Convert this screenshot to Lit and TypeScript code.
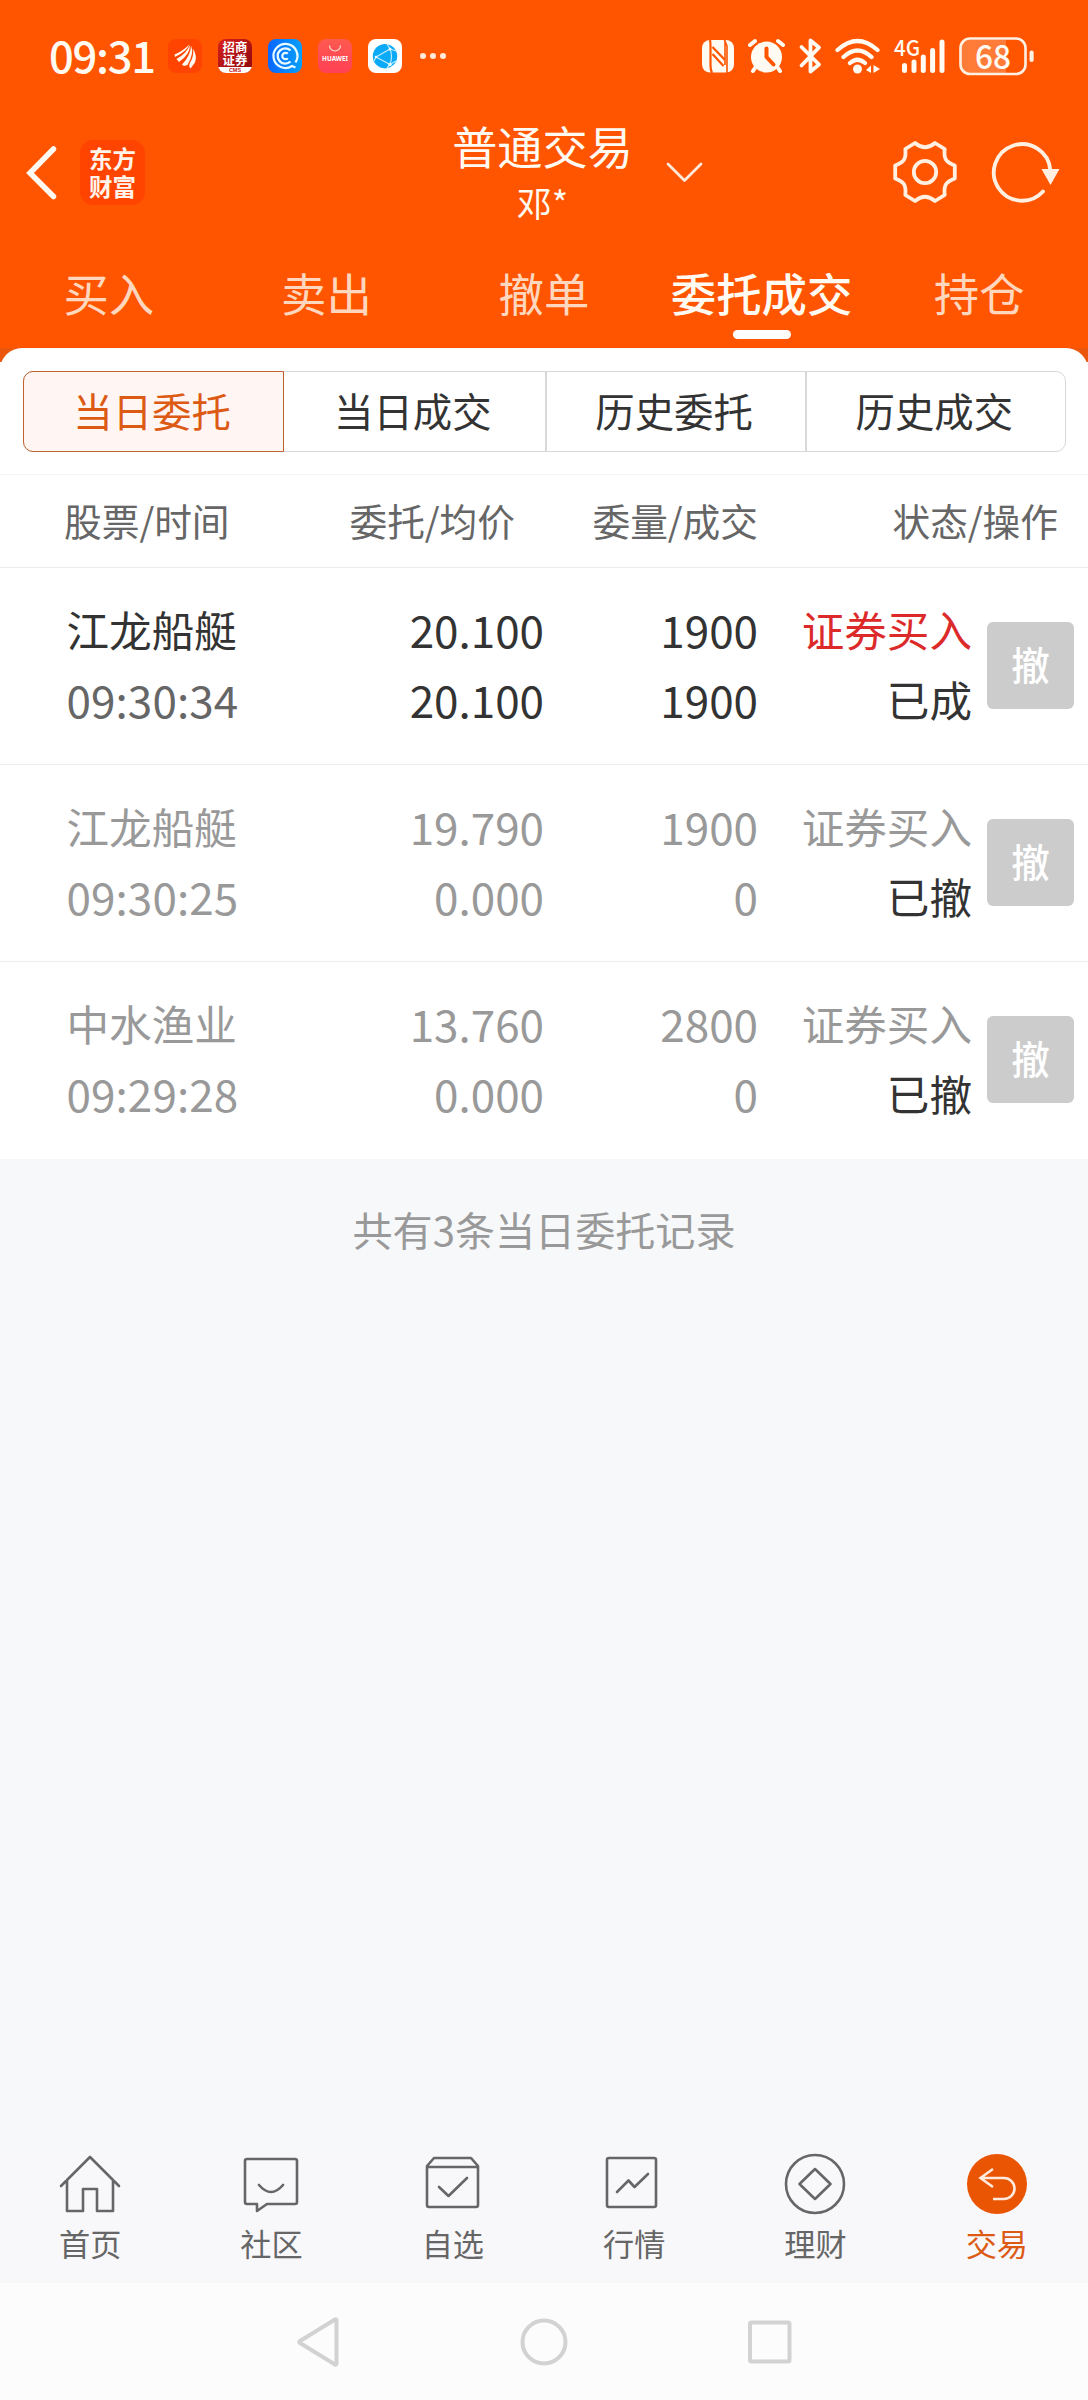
import { LitElement, html, css, svg } from "lit";
import { customElement } from "lit/decorators.js";
import { classMap } from "lit/directives/class-map.js";

interface Order {
  name: string;
  time: string;
  price: string;
  avg: string;
  qty: string;
  filled: string;
  side: string;
  state: string;
  dim: boolean;
}

const ORDERS: Order[] = [
  { name: "江龙船艇", time: "09:30:34", price: "20.100", avg: "20.100", qty: "1900", filled: "1900", side: "证券买入", state: "已成", dim: false },
  { name: "江龙船艇", time: "09:30:25", price: "19.790", avg: "0.000", qty: "1900", filled: "0", side: "证券买入", state: "已撤", dim: true },
  { name: "中水渔业", time: "09:29:28", price: "13.760", avg: "0.000", qty: "2800", filled: "0", side: "证券买入", state: "已撤", dim: true },
];

const TABS = ["买入", "卖出", "撤单", "委托成交", "持仓"];
const SEGMENTS = ["当日委托", "当日成交", "历史委托", "历史成交"];
const HEADS = ["股票/时间", "委托/均价", "委量/成交", "状态/操作"];

const NAV = [
  { label: "首页", icon: svg`<path d="M3 33 L32 4 L61 33 M9 27 V58 H25 V36 H39 V58 H55 V27"/>` },
  { label: "社区", icon: svg`<path d="M8 6 H56 Q58 6 58 8 V49 Q58 51 56 51 H28 L18 58 V51 H8 Q6 51 6 49 V8 Q6 6 8 6Z M20 32 Q32 46 44 32"/>` },
  { label: "自选", icon: svg`<path d="M6 13 L13 5 H50 L57 13 V52 Q57 54 55 54 H8 Q6 54 6 52Z M6 14 H57 M18 34 L27.500 43 L46 25"/>` },
  { label: "行情", icon: svg`<rect x="5" y="5" width="49" height="49" rx="2"/><path d="M15 39 L26.500 27.500 L32.500 34 L46 21"/>` },
  { label: "理财", icon: svg`<circle cx="32" cy="31" r="29"/><path d="M32 16 L47.500 31 L32 46 L16.500 31Z"/>` },
  { label: "交易", icon: svg`<circle class="disc" cx="32" cy="31" r="30"/><path class="back" d="M28 16 L15.500 25 L28 34 M15.500 25 H39 A10.500 10.500 0 0 1 39 46 H28"/>` },
];

@customElement("status-bar")
export class StatusBar extends LitElement {
  static styles = css`
    :host { display: flex; justify-content: space-between; align-items: center; height: 112px; padding: 0 54px 0 49px; box-sizing: border-box; color: #fffaf2; font-family: "Noto Sans CJK SC", sans-serif; }
    .left, .right { display: flex; align-items: center; }
    .time { width: 119px; font-size: 43.500px; line-height: 64px; font-weight: 500; letter-spacing: -1.300px; white-space: nowrap; padding-bottom: 2px; }
    .apps { display: flex; gap: 16px; }
    .dots { margin-left: 17px; }
    svg { display: block; }
    .cms { width: 34px; height: 34px; border-radius: 8px; background: linear-gradient(135deg, #d8201c, #980c10 80%); overflow: hidden; display: flex; flex-direction: column; align-items: center; color: #fff; }
    .cms-name { width: 25px; height: 26px; margin-top: 2px; font-size: 12.400px; line-height: 13px; font-weight: 700; word-break: break-all; }
    .cms-foot { width: 34px; height: 6px; background: #fff; color: #c02020; font: 700 5.500px/6px "Liberation Sans", sans-serif; text-align: center; }
    .t-hw { font: 700 6.500px "Noto Sans", sans-serif; }
    .t-4g { font: 500 22px "Noto Sans CJK SC", sans-serif; }
    .t-bat { font: 500 34px "Noto Sans CJK SC", sans-serif; }
  `;

  render() {
    return html`
      <div class="left">
        <span class="time">09:31</span>
        <div class="apps">
          <svg width="34" height="34" viewBox="0 0 34 34">
            <rect width="34" height="34" rx="8" fill="#ff4300" />
            <path fill="#fff8ee" d="M6.500 15.500 Q14 12.500 21.500 5.500 Q18.500 12.500 7 18Z M8.500 20 Q18 15 22 6 Q22 15.500 11 23Z M14 25.500 Q23 16 23 6.500 Q26.500 14 19.500 26 L16 27Z M22.500 29.500 Q19.500 27 23.500 21 Q26 15 25 9.500 Q29.500 17 27 23.500Z" />
          </svg>
          <div class="cms"><span class="cms-name">招商证券</span><span class="cms-foot">CMS</span></div>
          <svg width="34" height="34" viewBox="0 0 34 34">
            <defs><linearGradient id="cc"><stop offset="0" stop-color="#0a66ff" /><stop offset="1" stop-color="#06a0fb" /></linearGradient></defs>
            <rect width="34" height="34" rx="8" fill="url(#cc)" />
            <g fill="none" stroke="#e8fbff">
              <path stroke-width="2.200" d="M27.500 23.500 A12 12 0 1 0 24 27 L27.500 28.500" />
              <path stroke-width="2.400" d="M22.500 11.500 A7.600 7.600 0 1 0 22.500 22.500" />
              <path stroke-width="2.200" d="M19.800 14.800 A3.200 3.200 0 1 0 19.800 19.200" />
            </g>
          </svg>
          <svg width="34" height="34" viewBox="0 0 34 34">
            <defs><linearGradient id="hw" x1="0" y1="0" x2="0" y2="1"><stop offset="0" stop-color="#ff5a50" /><stop offset="1" stop-color="#ff4055" /></linearGradient></defs>
            <rect width="34" height="34" rx="8" fill="url(#hw)" />
            <path d="M11.500 6.500 A5.500 5.500 0 0 0 22.500 6.500" fill="none" stroke="#ffd9d4" stroke-width="1.200" />
            <text class="t-hw" x="17" y="22" text-anchor="middle" textLength="26" lengthAdjust="spacingAndGlyphs" fill="#fff">HUAWEI</text>
          </svg>
          <svg width="34" height="34" viewBox="0 0 34 34">
            <rect width="34" height="34" rx="8" fill="#fff" />
            <circle cx="17" cy="17.200" r="12.200" fill="#0aaaf8" />
            <g fill="none" stroke="#bfeaff" stroke-width="1.200"><path d="M19 5 L22 10 L8 18 L22 25.500 L19 29 M22 10 Q25 17 22 25.500 M8 18 L6 22 M22 10 L28 12 M22 25.500 L28 22" /></g>
            <g fill="#e8f8ff"><circle cx="22" cy="10" r="1.500" /><circle cx="8" cy="18" r="1.300" /><circle cx="22" cy="25.500" r="1.800" /></g>
          </svg>
        </div>
        <svg class="dots" width="28" height="8" viewBox="0 0 28 8" fill="#ffeadb"><circle cx="4" cy="4" r="3" /><circle cx="14" cy="4" r="3" /><circle cx="24" cy="4" r="3" /></svg>
      </div>
      <svg class="right" width="336" height="52" viewBox="698 30 336 52" fill="#fffaf2">
        <rect x="702" y="40" width="32" height="32.500" rx="8" />
        <g fill="none" stroke="#ff5500" stroke-width="2.200">
          <path d="M710 40 Q710.500 42 710.500 46 V65 Q710.500 70 712 73 M712.500 47 L725 60 M712.500 54 L723.500 66" />
          <path d="M725 40 V65 M724 39 L727 46 V73" stroke-width="1.600" />
        </g>
        <circle cx="766.500" cy="57" r="15.500" />
        <g stroke="#fffaf2" stroke-width="4" stroke-linecap="round"><path d="M750 45 L755 41 M783 45 L778 41 M755 68 L753 71 M778 68 L780 71" /></g>
        <path d="M766.500 48.500 V57 L773.500 64.500" fill="none" stroke="#ff5500" stroke-width="4" stroke-linecap="round" stroke-linejoin="round" />
        <path d="M801.500 47 L819 64.500 L810.500 71.500 V40.500 L819 47.500 L801.500 65.500" fill="none" stroke="#fffaf2" stroke-width="3.800" stroke-linecap="round" stroke-linejoin="round" />
        <g fill="none" stroke="#fffaf2" stroke-width="4.200" stroke-linecap="round">
          <path d="M837.500 50 Q857.500 32 877.500 50 M843.500 57 Q857.500 44 871.500 57 M850 63 Q857.500 56.500 865 63" />
        </g>
        <circle cx="857.500" cy="69" r="4.500" />
        <path d="M866 70 L871 65.500 V73 M873.500 65 L880 69 L873.500 73Z" />
        <text class="t-4g" x="894" y="56" textLength="26" lengthAdjust="spacingAndGlyphs">4G</text>
        <g stroke="#fffaf2" stroke-width="5" stroke-linecap="round"><path d="M904.500 65.500 V70.500 M914 62 V70.500 M923.300 57 V70.500 M932.600 50.500 V70.500 M942 42 V70.500" /></g>
        <path d="M968 40 H1006 V73 H968 Q961 73 961 66 V47 Q961 40 968 40Z" fill="#ff7b38" />
        <rect x="960.500" y="38.500" width="65" height="35.500" rx="9.500" fill="none" stroke="#fff0e4" stroke-width="2.600" />
        <rect x="1029.500" y="50.500" width="4.200" height="11.500" rx="2.100" fill="#fff0e4" />
        <text class="t-bat" x="993" y="68.500" text-anchor="middle" textLength="36" lengthAdjust="spacingAndGlyphs">68</text>
      </svg>
    `;
  }
}

@customElement("app-root")
export class AppRoot extends LitElement {
  static styles = css`
    :host { display: flex; flex-direction: column; width: 1088px; height: 2400px; overflow: hidden; background: #f7f8fa; font-family: "Noto Sans CJK SC", sans-serif; color: #333; }
    * { box-sizing: border-box; }
    svg { display: block; }
    .top { flex: none; height: 348px; background: #ff5500; display: flex; flex-direction: column; color: #fffaf2; }
    .bar { height: 120px; display: grid; grid-template-columns: 360px 1fr 360px; }
    .bar-left { display: flex; align-items: center; padding-left: 24px; }
    .badge { width: 65px; height: 65px; margin-left: 22px; border-radius: 13px; background: #ff4400; color: #fff3ea; padding: 4px 8px 0 9px; font-size: 23.500px; line-height: 28px; font-weight: 700; word-break: break-all; }
    .bar-mid { display: flex; justify-content: center; padding-top: 3px; }
    .titles { width: 182px; display: flex; flex-direction: column; align-items: center; margin-left: 66px; }
    .title { font-size: 45.200px; line-height: 62px; white-space: nowrap; }
    .sub { font-size: 35px; line-height: 50px; }
    .chev { margin: 45px 0 0 31px; }
    .bar-right { display: flex; align-items: center; justify-content: flex-end; gap: 31px; padding-right: 27px; }
    .tabs { height: 116px; display: grid; grid-template-columns: repeat(5, 1fr); }
    .tab { display: flex; flex-direction: column; align-items: center; padding-top: 27px; font-size: 45.400px; line-height: 66px; color: #ffd7be; }
    .tab.on { color: #fffaf2; font-weight: 500; }
    .mark { width: 58px; height: 9px; margin-top: 5px; border-radius: 4.500px; background: #fff; }
    .edge { flex: none; height: 127px; background: linear-gradient(#e9560c 14px, #fff 14px); }
    .sheet { height: 127px; border-radius: 22px 22px 0 0; background: #fff; padding: 23px 22px 0 23px; border-bottom: 1px solid #f4f4f4; }
    .segs { display: grid; grid-template-columns: repeat(4, 1fr); height: 81px; border: 1px solid #d6d8d9; border-radius: 10px; }
    .seg { display: flex; align-items: center; justify-content: center; font-size: 39.400px; line-height: 56px; border-left: 2px solid #d6d8d9; padding: 0 3px 4px 0; }
    .seg:first-child { border-left: none; }
    .seg.on { margin: -1px 0 -1px -1px; border: 1.500px solid #c0622f; border-radius: 10px 0 0 10px; background: #fff5f2; color: #dc5a14; }
    .seg.on + .seg { border-left: none; }
    .heads { flex: none; height: 93px; background: #fff; border-bottom: 1px solid #ececec; display: grid; grid-template-columns: 285px 230px 243px 300px; align-items: center; padding: 0 30px 3px 0; font-size: 37.700px; line-height: 54px; color: #666; text-align: right; white-space: nowrap; }
    .heads span:first-child { text-align: left; padding-left: 64px; }
    .row { flex: none; height: 197px; background: #fff; border-bottom: 1px solid #ececec; display: grid; grid-template-columns: 300px 244px 214px 214px 102px; align-items: center; font-size: 42.600px; line-height: 70px; white-space: nowrap; text-align: right; }
    .row.last { border-bottom-color: #fff; }
    .col { display: flex; flex-direction: column; padding-bottom: 4px; }
    .name { text-align: left; padding-left: 66.500px; }
    .num { font-size: 44px; }
    .name .num { color: #666; letter-spacing: 0.100px; padding-left: 0; }
    .buy { color: #dc2a2a; }
    .dim .name, .dim .name .num, .dim .digits, .dim .buy { color: #999; }
    .cancel { width: 87px; height: 87px; margin: 0 0 1px 15px; border-radius: 6px; background: #ccc; color: #fff; font-size: 38.500px; line-height: 82px; font-weight: 500; text-align: center; }
    .count { flex: 1; padding-top: 40px; text-align: center; font-size: 40.100px; line-height: 60px; color: #999; }
    .nav { flex: none; height: 134px; background: #f8f8fb; display: grid; grid-template-columns: repeat(6, 1fr); }
    .item { display: flex; flex-direction: column; align-items: center; padding: 4px 1px 0 0; font-size: 31.200px; line-height: 44px; color: #666; }
    .item svg { fill: none; stroke: #666; stroke-width: 2.600; stroke-linejoin: round; stroke-linecap: round; margin-bottom: 4px; }
    .item.on { color: #dc5a14; }
    .item .disc { fill: #ea5504; stroke: none; }
    .item .back { stroke: #ffeadb; stroke-linecap: butt; stroke-linejoin: miter; }
    .keys { flex: none; height: 117px; background: #fcfcfc; display: grid; grid-template-columns: repeat(3, 226px); justify-content: center; align-items: center; justify-items: center; }
    .keys svg { fill: none; stroke: #d2d2d2; stroke-width: 4; stroke-linejoin: round; }
  `;

  render() {
    return html`
      <div class="top">
        <status-bar></status-bar>
        <div class="bar">
          <div class="bar-left">
            <svg width="34" height="60" viewBox="0 0 34 60" fill="none" stroke="#fffaf2" stroke-width="5.500" stroke-linecap="round" stroke-linejoin="miter"><path d="M29.500 7 L6 31 L29.500 54.500" /></svg>
            <div class="badge">东方财富</div>
          </div>
          <div class="bar-mid">
            <div class="titles"><span class="title">普通交易</span><span class="sub">邓*</span></div>
            <svg class="chev" width="38" height="24" viewBox="0 0 38 24" fill="none" stroke="#ffeadb" stroke-width="2.800" stroke-linecap="round" stroke-linejoin="round"><path d="M3 4 L19.500 20.500 L36 4" /></svg>
          </div>
          <div class="bar-right">
            <svg width="66" height="66" viewBox="-33 -33 66 66" fill="none" stroke="#fff0e2" stroke-width="3.800" stroke-linejoin="round">
              <path d="M-10 -29 Q0 -20.500 10 -29 L19.700 -23 C18.500 -13 21 -10 29.800 -6.500 L29.800 6.500 C21 10 18.500 13 19.700 23 L10 29 Q0 20.500 -10 29 L-19.700 23 C-18.500 13 -21 10 -29.800 6.500 L-29.800 -6.500 C-21 -10 -18.500 -13 -19.700 -23Z" />
              <circle r="11.200" />
            </svg>
            <svg width="72" height="66" viewBox="-33 -33 72 66" fill="none" stroke="#fff0e2" stroke-width="3.800" stroke-linecap="round">
              <path d="M28.300 -2 A28.300 28.300 0 1 0 21 19.500" />
              <path d="M19.500 -3 H37.500 L28.500 13Z" fill="#fff0e2" stroke="none" />
            </svg>
          </div>
        </div>
        <div class="tabs">
          ${TABS.map((t, i) => html`<div class=${classMap({ tab: true, on: i === 3 })}>${t}${i === 3 ? html`<div class="mark"></div>` : ""}</div>`)}
        </div>
      </div>
      <div class="edge">
        <div class="sheet">
          <div class="segs">${SEGMENTS.map((s, i) => html`<div class=${classMap({ seg: true, on: i === 0 })}>${s}</div>`)}</div>
        </div>
      </div>
      <div class="heads">${HEADS.map((h) => html`<span>${h}</span>`)}</div>
      ${ORDERS.map(
        (o, i) => html`
          <div class=${classMap({ row: true, dim: o.dim, last: i === ORDERS.length - 1 })}>
            <div class="col name"><span>${o.name}</span><span class="num">${o.time}</span></div>
            <div class="col num digits"><span>${o.price}</span><span>${o.avg}</span></div>
            <div class="col num digits"><span>${o.qty}</span><span>${o.filled}</span></div>
            <div class="col"><span class="buy">${o.side}</span><span>${o.state}</span></div>
            <div class="cancel">撤</div>
          </div>
        `
      )}
      <div class="count">共有3条当日委托记录</div>
      <div class="nav">
        ${NAV.map((n, i) => html`<div class=${classMap({ item: true, on: i === 5 })}><svg width="64" height="64" viewBox="0 0 64 64">${n.icon}</svg>${n.label}</div>`)}
      </div>
      <div class="keys">
        <svg width="50" height="52" viewBox="0 0 50 52"><path d="M43.500 4.500 V47.500 Q43.500 49 42 48.500 L7 27 Q5.500 26 7 25 L42 3.500 Q43.500 3 43.500 4.500Z" /></svg>
        <svg width="52" height="52" viewBox="0 0 52 52"><circle cx="26" cy="26" r="21.500" /></svg>
        <svg width="52" height="52" viewBox="0 0 52 52"><rect x="6" y="6.500" width="39.500" height="39" rx="1.500" /></svg>
      </div>
    `;
  }
}
